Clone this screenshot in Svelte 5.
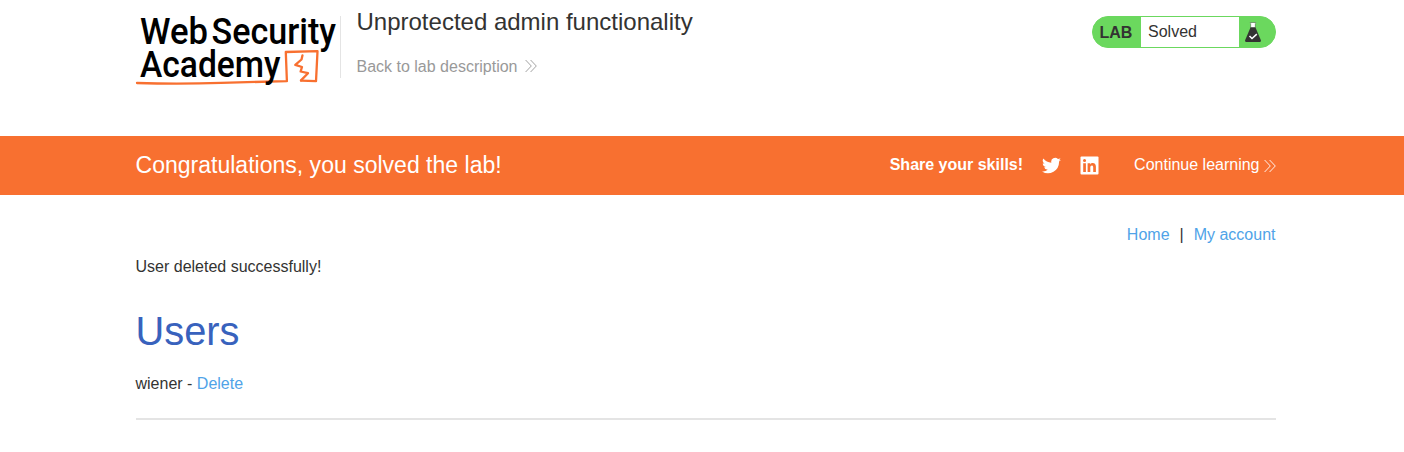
<script>
  const users = ['wiener'];
</script>

{#snippet chevrons()}
  <svg class="chevrons" viewBox="0 0 12 14" width="12" height="14" aria-hidden="true">
    <path d="M.6 1 6.3 7 .6 13M5.6 1 11.3 7 5.6 13" />
  </svg>
{/snippet}

<header>
  <div class="container head">
    <svg class="logo" width="204" height="76" viewBox="0 0 204 76" role="img" aria-label="Web Security Academy">
      <path class="underline" d="M1 73Q45 74.2 85 72.8L150.9 71.2 149.8 42 181.5 41.2 180 71.2 165 70.6" />
      <path class="bolt" d="M166.5 45.3 165.5 49.5 159.3 54.9 166 57 164.6 61.5 172 63.2 165 70.4" />
      <g class="wordmark">
        <text x="4" y="34.3" textLength="68" lengthAdjust="spacingAndGlyphs">Web</text>
        <text x="75.5" y="34.3" textLength="124.5" lengthAdjust="spacingAndGlyphs">Security</text>
        <text x="4" y="67" textLength="140.5" lengthAdjust="spacingAndGlyphs">Academy</text>
      </g>
    </svg>
    <div class="title">
      <h2>Unprotected admin functionality</h2>
      <a class="back" href="#lab">Back to lab description {@render chevrons()}</a>
    </div>
    <div class="status">
      <strong>LAB</strong>
      <span>Solved</span>
      <svg width="16" height="20" viewBox="0 0 16 20" aria-hidden="true">
        <path d="M5.3 1H10.7L10 2.6V7H6V2.6Z" fill="#fff" />
        <path d="M4.8.5H11.2M5.7 1V6M10.3 1V6" fill="none" stroke="#777" stroke-width=".6" />
        <path d="M5.6 5.2H10.4L16 18.4Q16 20 14.5 20H1.5Q0 20 0 18.4Z" fill="#333332" />
        <path d="M4.5 14 7 16.5 11.8 12.1" fill="none" stroke="#fff" stroke-width="1.5" />
      </svg>
    </div>
  </div>
</header>

<section class="banner">
  <div class="container notice">
    <h4>Congratulations, you solved the lab!</h4>
    <strong>Share your skills!</strong>
    <svg class="twitter" width="19" height="19" viewBox="0 0 24 24" fill="#fff" aria-hidden="true">
      <path d="M24 4.6a10 10 0 0 1-2.8.8 5 5 0 0 0 2.1-2.7 10 10 0 0 1-3.1 1.2 4.9 4.9 0 0 0-8.4 4.5A14 14 0 0 1 1.7 3.2a4.9 4.9 0 0 0 1.5 6.5 5 5 0 0 1-2.2-.6v.1a4.9 4.9 0 0 0 3.9 4.8 5 5 0 0 1-2.2.1 4.9 4.9 0 0 0 4.6 3.4A9.9 9.9 0 0 1 0 19.5 14 14 0 0 0 21.5 7.1 10 10 0 0 0 24 4.6Z" />
    </svg>
    <svg class="linkedin" width="19" height="19" viewBox="0 0 19 19" aria-hidden="true">
      <path d="M1.5.5H17.5Q18.5.5 18.5 1.5V17.5Q18.5 18.5 17.5 18.5H1.5Q.5 18.5.5 17.5V1.5Q.5.5 1.5.5Z" fill="#fff" />
      <path d="M3.2 7.2H5.9V15.9H3.2ZM3 4.5A1.55 1.55 0 1 1 6.1 4.5 1.55 1.55 0 0 1 3 4.5M7.6 7.2H10.2V8.4C11.5 6.3 15.9 6.5 15.9 10.5V15.9H13.2V11.4C13.2 8.6 10.3 8.9 10.3 11.4V15.9H7.6Z" fill="#f87030" />
    </svg>
    <a class="continue" href="#learn">Continue learning {@render chevrons()}</a>
  </div>
</section>

<main class="container">
  <nav><a href="#home">Home</a><span>|</span><a href="#account">My account</a></nav>
  <p>User deleted successfully!</p>
  <h1>Users</h1>
  {#each users as user}
    <div class="user">{user} - <a href="#delete">Delete</a></div>
  {/each}
  <hr />
</main>

<style>
  :global(body) {
    background: #fff;
    color: #333332;
    font: 16px/24px "Liberation Sans", Arial, sans-serif;
    overflow: hidden;
  }
  .container {
    width: 1140px;
    margin-left: 135.5px;
  }
  a { color: #4fa3e8; text-decoration: none; }
  h1, h2, h4, p { margin: 0; font-weight: 400; }
  .chevrons path { fill: none; stroke: currentColor; stroke-width: 0.9; }
  .head {
    display: flex;
    align-items: flex-start;
    height: 120px;
    padding-top: 16px;
  }
  .logo { flex: none; margin-top: -6px; overflow: visible; }
  .wordmark { font: 500 37.5px Roboto, sans-serif; fill: #000; }
  .underline, .bolt {
    fill: none;
    stroke: #f87030;
    stroke-width: 2.3;
    stroke-linejoin: round;
    stroke-linecap: round;
  }
  .title {
    height: 62px;
    padding-left: 16px;
    border-left: 1px solid #e4e4e4;
  }
  h2 { font-size: 24px; line-height: 28px; margin-top: -8px; }
  .back { display: flex; align-items: center; gap: 8px; margin-top: 19px; color: #999; }
  .back .chevrons { margin-top: -2px; }
  .status {
    box-sizing: border-box;
    display: flex;
    align-items: center;
    width: 184px;
    height: 32px;
    margin-left: auto;
    border: 1px solid #6bd85e;
    border-radius: 16px;
    background: #6bd85e;
    overflow: hidden;
  }
  .status strong { width: 41px; padding: 2px 0 0 7px; }
  .status span { box-sizing: border-box; width: 98px; height: 30px; padding-left: 7.5px; line-height: 29px; background: #fff; }
  .status svg { margin-left: 6px; }
  .banner { background: #f87030; color: #fff; }
  .notice { display: flex; align-items: center; height: 59px; }
  h4 { font-size: 23.04px; margin: -2px auto 0 0; }
  .notice strong { margin-top: -2px; }
  .twitter { margin-left: 19px; }
  .linkedin { margin-left: 19px; }
  .continue { display: flex; align-items: center; gap: 4px; margin-left: 35px; margin-top: -2px; color: #fff; }
  .continue .chevrons { margin-top: 3px; }
  main { padding-top: 28px; }
  nav { display: flex; justify-content: flex-end; gap: 10px; }
  p { margin-top: 8px; }
  h1 { margin-top: 29px; font-size: 39.8px; line-height: 46px; color: #3862bd; }
  .user { margin-top: 18px; }
  hr { height: 2px; margin: 22px 0 0; border: 0; background: #e4e4e4; }
</style>
